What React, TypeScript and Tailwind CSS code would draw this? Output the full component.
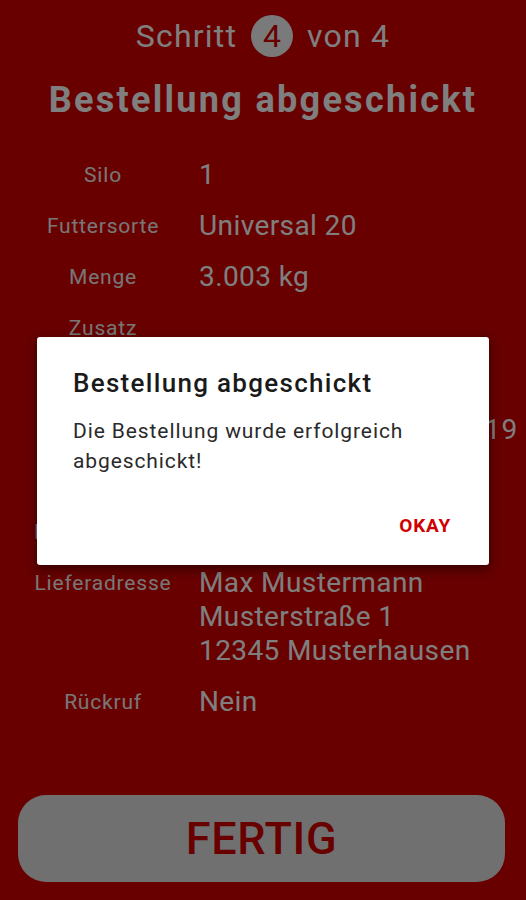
import React from 'react';

const rows: { label: string; value: string[]; wide?: boolean }[] = [
  { label: 'Silo', value: ['1'] },
  { label: 'Futtersorte', value: ['Universal 20'] },
  { label: 'Menge', value: ['3.003 kg'] },
  { label: 'Zusatz', value: [''] },
  { label: 'Lieferart', value: ['Lose'] },
  { label: 'Liefertermin', value: ['Donnerstag, 14.03.2019'], wide: true },
  { label: 'Uhrzeit', value: ['vormittags'] },
  { label: 'Bemerkungen', value: ['Keine'] },
  { label: 'Lieferadresse', value: ['Max Mustermann', 'Musterstraße 1', '12345 Musterhausen'] },
  { label: 'Rückruf', value: ['Nein'] },
];

export default function App() {
  return (
    <div className="relative h-[900px] w-[526px] overflow-hidden bg-[#d00000] font-['Roboto',sans-serif] text-white">
      <div className="flex flex-col pt-[14px]">
        <div className="flex h-[44px] items-center justify-center gap-[14px] text-[32px] tracking-[1.2px]">
          <span>Schritt</span>
          <span className="flex h-[42px] w-[42px] items-center justify-center rounded-full bg-[#f4f4f4] tracking-normal text-[#d00000]">
            4
          </span>
          <span>von 4</span>
        </div>
        <h1 className="mt-[20px] text-center text-[36px] font-bold leading-[44px] tracking-[2.3px]">
          Bestellung abgeschickt
        </h1>

        <div className="mt-[27px] flex flex-col">
          {rows.map((row) => (
            <div key={row.label} className="flex items-start py-[8.5px]">
              <div className="ml-[8px] w-[190px] text-center text-[21px] leading-[34px] tracking-[0.8px] text-[#f0eeee]">
                {row.label}
              </div>
              <div
                className={`flex min-h-[34px] flex-col whitespace-nowrap pl-[1px] text-[28px] leading-[34px] ${
                  row.wide ? 'tracking-[1px]' : 'tracking-[0.4px]'
                }`}
              >
                {row.value.map((line, i) => (
                  <span key={i}>{line}</span>
                ))}
              </div>
            </div>
          ))}
        </div>
      </div>

      <div className="absolute bottom-[18px] left-[18px] right-[21px]">
        <button className="flex h-[87px] w-full items-center justify-center rounded-[28px] bg-[#e0e0e0] text-[45px] font-medium tracking-[0.6px] text-[#d00000]">
          FERTIG
        </button>
      </div>

      {/* dialog */}
      <div className="absolute inset-0 bg-black/50" />
      <div className="absolute left-[37px] top-[337px] flex h-[228px] w-[452px] flex-col rounded-[3px] bg-white shadow-[0_4px_12px_rgba(0,0,0,0.5)]">
        <div className="pl-[36px] pr-[20px] pt-[28px]">
          <h2 className="text-[26px] font-medium leading-[36px] tracking-[1.3px] text-[#1a1a1a]">
            Bestellung abgeschickt
          </h2>
          <p className="mt-[15px] text-[21px] leading-[30px] tracking-[0.9px] text-[#2a2a2a]">
            Die Bestellung wurde erfolgreich
            <br />
            abgeschickt!
          </p>
        </div>
        <div className="mt-auto flex justify-end pb-[25px] pr-[38px]">
          <span className="text-[19px] font-bold tracking-[0.8px] text-[#d00000]">OKAY</span>
        </div>
      </div>
    </div>
  );
}
